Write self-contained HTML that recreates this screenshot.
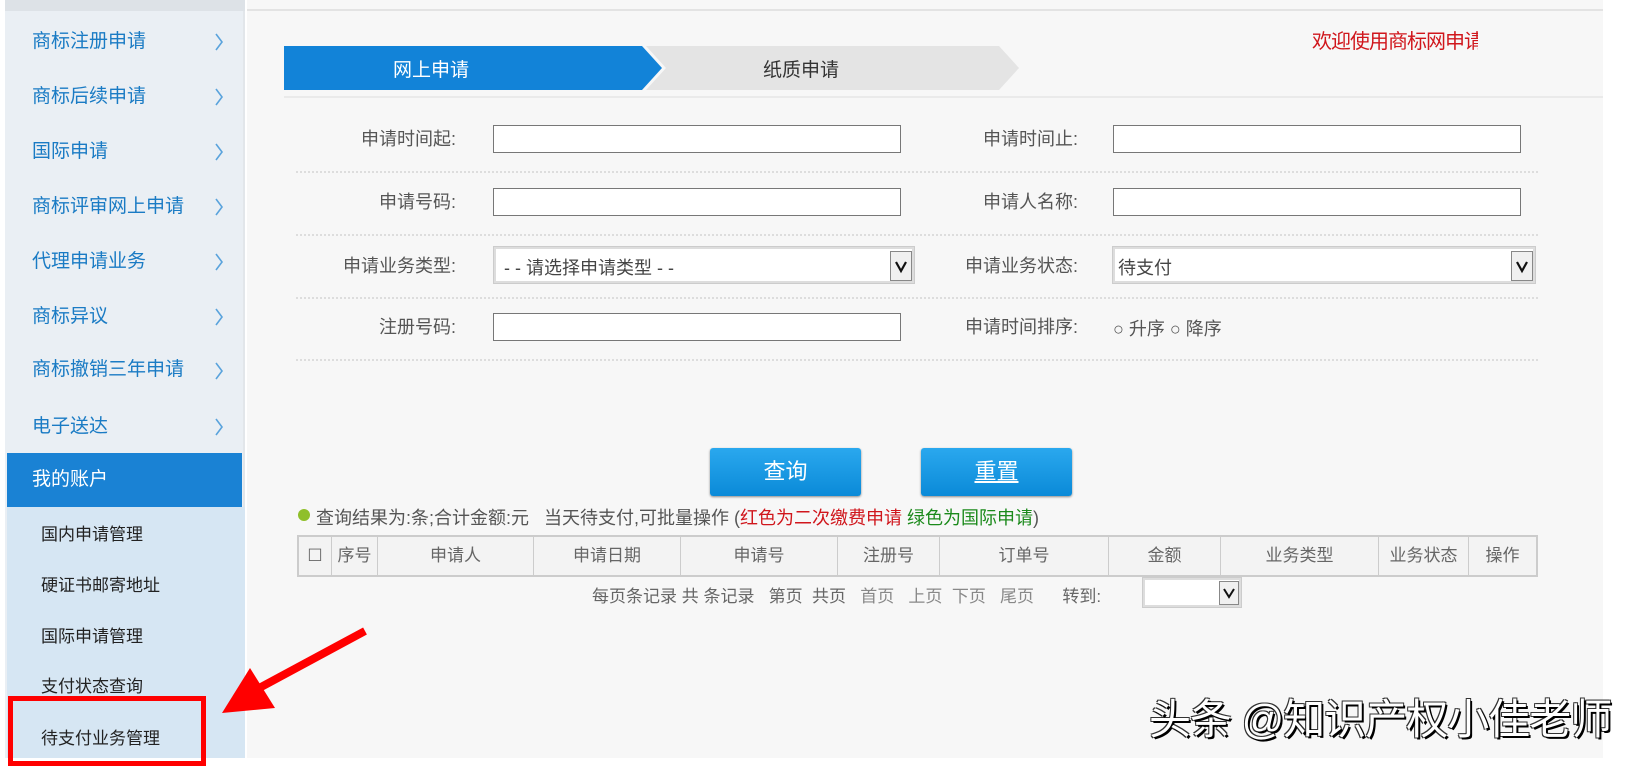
<!DOCTYPE html>
<html><head><meta charset="utf-8"><style>
*{margin:0;padding:0;box-sizing:border-box}
body{width:1636px;height:758px;overflow:hidden;background:#fff;font-family:"Liberation Sans","Noto Sans CJK SC",sans-serif;position:relative}
.a{position:absolute;white-space:nowrap}
.side{left:5px;top:0;width:240px;height:758px;background:#eaeff4;border-right:2px solid #e2e6ea}
.main{left:247px;top:0;width:1356px;height:758px;background:#f7f7f7}
.mi{left:32px;font-size:19px;color:#1a7bc4;line-height:24px}
.ch{left:215px}
.si{left:41px;font-size:17px;color:#222;line-height:22px}
.lb{font-size:18px;color:#555;line-height:24px;text-align:right}
.in{background:#fff;border:1px solid #777;height:28px}
.dot{height:0;border-top:2px dotted #ddd;left:296px;width:1242px}
.sel{background:#fff;border:2px solid #ddd;outline:1px solid #ccc}
.sb{position:absolute;right:0;top:2px;width:22px;height:30px;border:1px solid #888;background:#f0f0f0;text-align:center}
.btn{background:linear-gradient(#2aa8ee,#0a8ad8);border-radius:3px;color:#fff;font-size:22px;text-align:center;line-height:48px;height:48px;box-shadow:0 1px 2px #888}
.th{top:536px;height:40px;font-size:17px;color:#666;line-height:40px;text-align:center;border-right:1px solid #ccc}
</style></head><body>
<div class="a side"></div>
<div class="a" style="left:5px;top:0;width:240px;height:11px;background:#dde2e7"></div>
<div class="a main"></div>
<div class="a" style="left:247px;top:9px;width:1356px;height:2px;background:#e3e3e3"></div>

<div class="a mi" style="top:30px">商标注册申请</div>
<div class="a mi" style="top:85px">商标后续申请</div>
<div class="a mi" style="top:140px">国际申请</div>
<div class="a mi" style="top:195px">商标评审网上申请</div>
<div class="a mi" style="top:250px">代理申请业务</div>
<div class="a mi" style="top:305px">商标异议</div>
<div class="a mi" style="top:358px">商标撤销三年申请</div>
<div class="a mi" style="top:415px">电子送达</div>
<svg class="a" style="left:0;top:0" width="245" height="450" fill="none" stroke="#5aa3dc" stroke-width="1.6">
<polyline points="216,34 222,42 216,50"/><polyline points="216,89 222,97 216,105"/><polyline points="216,144 222,152 216,160"/><polyline points="216,199 222,207 216,215"/><polyline points="216,254 222,262 216,270"/><polyline points="216,309 222,317 216,325"/><polyline points="216,363 222,371 216,379"/><polyline points="216,419 222,427 216,435"/>
</svg>
<div class="a" style="left:7px;top:453px;width:235px;height:54px;background:#1a82d4"></div>
<div class="a mi" style="top:468px;color:#fff">我的账户</div>
<div class="a" style="left:7px;top:507px;width:238px;height:251px;background:#d6e6f3"></div>
<div class="a si" style="top:524px">国内申请管理</div>
<div class="a si" style="top:575px">硬证书邮寄地址</div>
<div class="a si" style="top:626px">国际申请管理</div>
<div class="a si" style="top:676px">支付状态查询</div>
<div class="a si" style="top:728px">待支付业务管理</div>
<div class="a" style="left:8px;top:696px;width:198px;height:70px;border:5px solid #f00"></div>
<svg class="a" style="left:0;top:0" width="1636" height="758"><line x1="365" y1="631" x2="250" y2="693" stroke="#f00" stroke-width="8"/><polygon points="222,713 250,668 275,708" fill="#f00"/></svg>

<svg class="a" style="left:284px;top:46px" width="740" height="44"><polygon points="0,0 358,0 378,22 358,44 0,44" fill="#1283d8"/><polygon points="362,0 715,0 735,22 715,44 362,44 382,22" fill="#e4e4e4"/></svg>
<div class="a" style="left:393px;top:55px;font-size:19px;color:#fff">网上申请</div>
<div class="a" style="left:763px;top:55px;font-size:19px;color:#333">纸质申请</div>
<div class="a" style="left:1312px;top:25px;width:166px;overflow:hidden;font-size:20px;color:#d0161c;letter-spacing:-1px">欢迎使用商标网申请系统</div>
<div class="a" style="left:284px;top:96px;width:1319px;height:2px;background:#eaeaea"></div>

<div class="a lb" style="left:280px;width:176px;top:127px">申请时间起:</div>
<div class="a in" style="left:493px;top:125px;width:408px"></div>
<div class="a lb" style="left:900px;width:178px;top:127px">申请时间止:</div>
<div class="a in" style="left:1113px;top:125px;width:408px"></div>
<div class="a dot" style="top:171px"></div>
<div class="a lb" style="left:280px;width:176px;top:190px">申请号码:</div>
<div class="a in" style="left:493px;top:188px;width:408px"></div>
<div class="a lb" style="left:900px;width:178px;top:190px">申请人名称:</div>
<div class="a in" style="left:1113px;top:188px;width:408px"></div>
<div class="a dot" style="top:234px"></div>
<div class="a lb" style="left:280px;width:176px;top:254px">申请业务类型:</div>
<div class="a sel" style="left:494px;top:247px;width:420px;height:36px"><span style="position:absolute;left:8px;top:5px;font-size:18px;color:#444">- - 请选择申请类型 - -</span><div class="sb"><svg width="20" height="28"><polyline points="5,10 10,19 15,10" fill="none" stroke="#111" stroke-width="2.2"/></svg></div></div>
<div class="a lb" style="left:900px;width:178px;top:254px">申请业务状态:</div>
<div class="a sel" style="left:1113px;top:247px;width:422px;height:36px"><span style="position:absolute;left:3px;top:5px;font-size:18px;color:#444">待支付</span><div class="sb"><svg width="20" height="28"><polyline points="5,10 10,19 15,10" fill="none" stroke="#111" stroke-width="2.2"/></svg></div></div>
<div class="a dot" style="top:297px"></div>
<div class="a lb" style="left:280px;width:176px;top:315px">注册号码:</div>
<div class="a in" style="left:493px;top:313px;width:408px"></div>
<div class="a lb" style="left:900px;width:178px;top:315px">申请时间排序:</div>
<div class="a" style="left:1113px;top:315px;font-size:18px;color:#555">○ 升序 ○ 降序</div>
<div class="a dot" style="top:359px"></div>

<div class="a btn" style="left:710px;top:448px;width:151px">查询</div>
<div class="a btn" style="left:921px;top:448px;width:151px;text-decoration:underline">重置</div>
<div class="a" style="left:298px;top:509px;width:12px;height:12px;border-radius:50%;background:#8fbf2a"></div>
<div class="a" style="left:316px;top:504px;font-size:18px;color:#555">查询结果为:条;合计金额:元&nbsp;&nbsp;&nbsp;当天待支付,可批量操作 (<span style="color:#d0161c">红色为二次缴费申请</span> <span style="color:#1b8a1b">绿色为国际申请</span>)</div>

<div class="a" style="left:297px;top:535px;width:1241px;height:42px;border:2px solid #ccc;background:#f3f3f3"></div>
<div class="a th" style="left:299px;width:33px">☐</div>
<div class="a th" style="left:332px;width:46px">序号</div>
<div class="a th" style="left:378px;width:156px">申请人</div>
<div class="a th" style="left:534px;width:147px">申请日期</div>
<div class="a th" style="left:681px;width:157px">申请号</div>
<div class="a th" style="left:838px;width:102px">注册号</div>
<div class="a th" style="left:940px;width:169px">订单号</div>
<div class="a th" style="left:1109px;width:112px">金额</div>
<div class="a th" style="left:1221px;width:158px">业务类型</div>
<div class="a th" style="left:1379px;width:90px">业务状态</div>
<div class="a th" style="left:1469px;width:67px;border:none">操作</div>
<div class="a" style="left:592px;top:582px;font-size:17px;color:#666">每页条记录 共 条记录&nbsp;&nbsp;&nbsp;第页&nbsp;&nbsp;共页&nbsp;&nbsp;&nbsp;<span style="color:#888">首页&nbsp;&nbsp;&nbsp;上页&nbsp;&nbsp;下页&nbsp;&nbsp;&nbsp;尾页</span>&nbsp;&nbsp;&nbsp;&nbsp;&nbsp;&nbsp;转到:</div>
<div class="a sel" style="left:1143px;top:578px;width:98px;height:29px"><div class="sb" style="top:1px;height:24px;width:20px"><svg width="18" height="22"><polyline points="4,7 9,15 14,7" fill="none" stroke="#111" stroke-width="2"/></svg></div></div>

<div class="a" style="left:1149px;top:686px;font-size:42px;color:#fff;letter-spacing:-1px;text-shadow:2px 2px 0 #000,-1px -1px 0 #333,1px -1px 0 #333,-1px 1px 0 #333">头条 @知识产权小佳老师</div>
</body></html>
